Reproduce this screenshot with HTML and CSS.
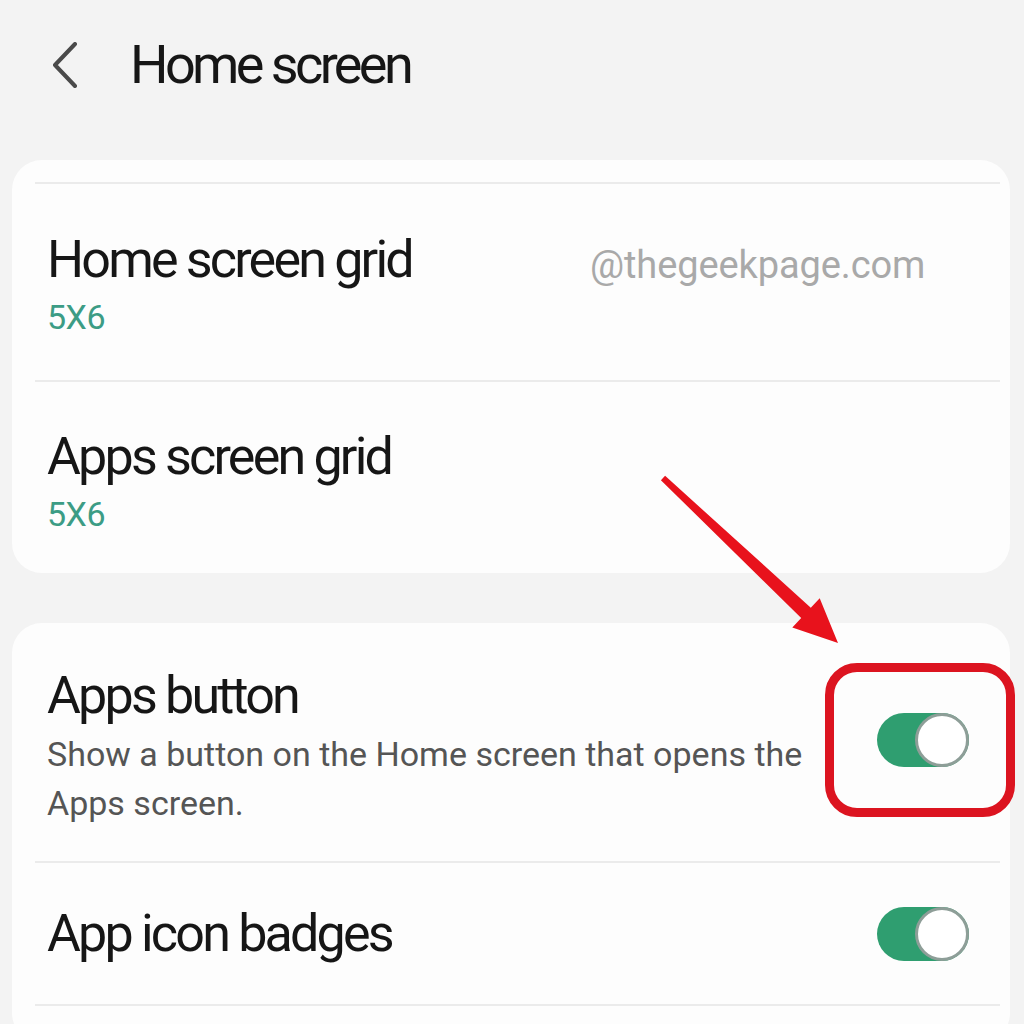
FILE: index.html
```html
<!DOCTYPE html>
<html>
<head>
<meta charset="utf-8">
<link rel="stylesheet" href="styles.css">
</head>
<body>
<div class="page">
  <header class="header">
    <svg class="back" width="30" height="46" viewBox="0 0 30 46"><path d="M25 2 L5 23 L25 44" fill="none" stroke="#4a4a4a" stroke-width="4" stroke-linecap="round" stroke-linejoin="round"/></svg>
    <h1 class="title">Home screen</h1>
  </header>

  <section class="card card-grid">
    <div class="top-rule"></div>
    <div class="row row-first">
      <div class="row-title">Home screen grid</div>
      <div class="row-sub">5X6</div>
      <div class="watermark">@thegeekpage.com</div>
    </div>
    <div class="rule"></div>
    <div class="row row-second">
      <div class="row-title">Apps screen grid</div>
      <div class="row-sub">5X6</div>
    </div>
  </section>

  <section class="card card-toggles">
    <div class="row toggle-row row-apps">
      <div class="row-text">
        <div class="row-title">Apps button</div>
        <div class="row-desc">Show a button on the Home screen that opens the Apps screen.</div>
      </div>
      <div class="switch"><span class="knob"></span></div>
    </div>
    <div class="rule"></div>
    <div class="row toggle-row row-badges">
      <div class="row-text">
        <div class="row-title">App icon badges</div>
      </div>
      <div class="switch"><span class="knob"></span></div>
    </div>
    <div class="rule"></div>
  </section>

  <div class="highlight"></div>
  <svg class="arrow" width="1024" height="1024" viewBox="0 0 1024 1024">
    <polygon points="665.1,475.8 810.8,607.7 819.7,598.2 838,643 792.3,627.4 801.2,617.9 660.9,480.2" fill="#e8121c"/>
  </svg>
</div>
</body>
</html>
```

FILE: styles.css
```css
* { box-sizing: border-box; margin: 0; padding: 0; }
html, body { width: 1024px; height: 1024px; overflow: hidden; }
body {
  background: #f3f3f3;
  font-family: Roboto, "Noto Sans", sans-serif;
  color: #161616;
}
.page { position: relative; width: 1024px; height: 1024px; }

.header {
  height: 160px;
  display: flex;
  align-items: flex-start;
  padding: 42px 0 0 50px;
  gap: 50px;
}
.back { display: block; }
.title {
  font-weight: 400;
  font-size: 54px;
  line-height: 54px;
  letter-spacing: -3.6px;
  color: #161616;
  margin-top: -4px;
}

.card {
  background: #fdfdfd;
  margin: 0 14px 0 12px;
  border-radius: 30px;
}
.card-grid { height: 413px; padding-top: 22px; }
.card-toggles { margin-top: 50px; height: 420px; }

.top-rule, .rule {
  height: 2px;
  background: #ebebeb;
  margin: 0 10px 0 23px;
}
.row { position: relative; padding-left: 35px; }
.row-first { height: 196px; padding-top: 50px; }
.row-second { height: 193px; padding-top: 49px; }

.row-title {
  font-size: 52px;
  line-height: 52px;
  letter-spacing: -2.8px;
  color: #161616;
}
.row-sub {
  margin-top: 14px;
  font-size: 34px;
  line-height: 34px;
  letter-spacing: -0.5px;
  color: #3c9c85;
}
.watermark {
  position: absolute;
  left: 578px;
  top: 62px;
  font-size: 38px;
  line-height: 38px;
  letter-spacing: -0.1px;
  color: #a9a9a9;
}

.toggle-row {
  display: flex;
  align-items: center;
  justify-content: space-between;
  padding-right: 41px;
}
.row-apps { height: 238px; align-items: flex-start; }
.row-apps .row-text { padding-top: 47px; }
.row-apps .switch { margin-top: 90px; }
.row-badges { height: 141px; }
.row-desc {
  margin-top: 8px;
  font-size: 34px;
  line-height: 49px;
  letter-spacing: 0;
  color: #555555;
  width: 790px;
}

.switch {
  position: relative;
  width: 92px;
  height: 54px;
  border-radius: 27px;
  background: #2f9e70;
}
.knob {
  position: absolute;
  right: 0;
  top: 0;
  width: 54px;
  height: 54px;
  border-radius: 50%;
  background: #ffffff;
  border: 3px solid #8e9e98;
}

.highlight {
  position: absolute;
  left: 825px;
  top: 663px;
  width: 190px;
  height: 154px;
  border: 9px solid #dc1420;
  border-radius: 32px;
}
.arrow { position: absolute; left: 0; top: 0; pointer-events: none; }
```
